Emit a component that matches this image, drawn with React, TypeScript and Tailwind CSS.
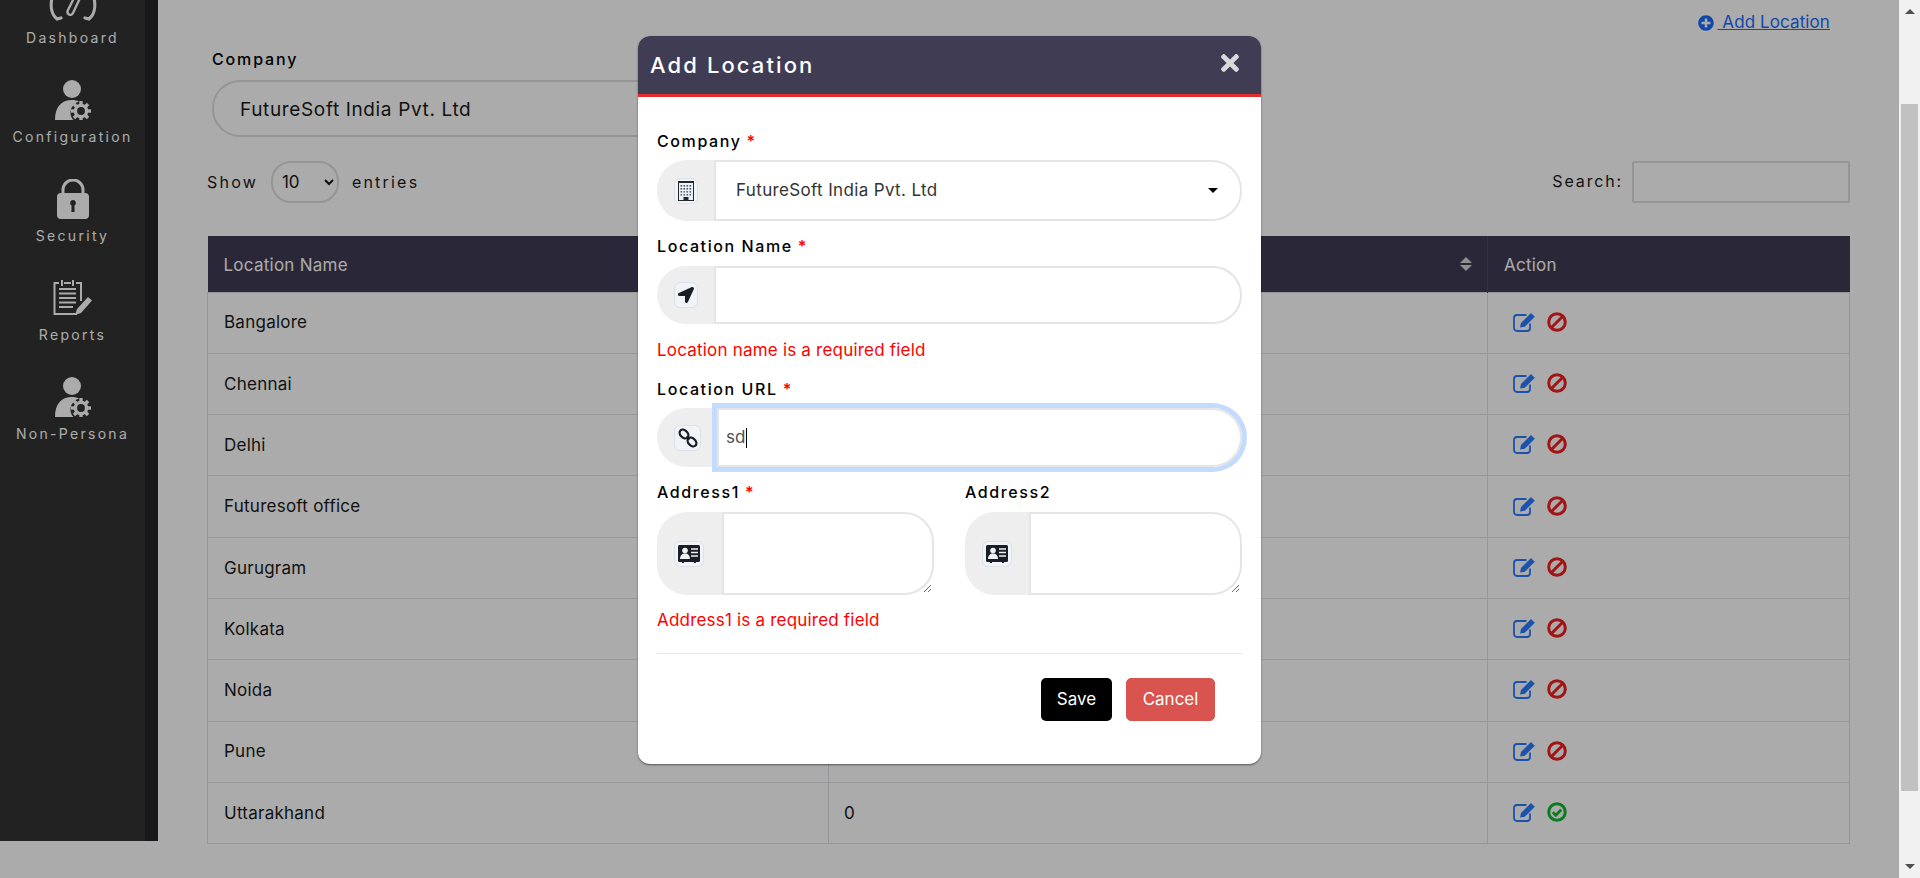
import type { ReactNode } from 'react'
import { FaLocationArrow, FaPlusCircle, FaTimes } from 'react-icons/fa'

const locations = ['Bangalore', 'Chennai', 'Delhi', 'Futuresoft office', 'Gurugram', 'Kolkata', 'Noida', 'Pune', 'Uttarakhand']

function GaugeIcon() {
  return (
    <svg viewBox="0 0 50 40" className="h-[40px] w-[50px]" fill="none" stroke="currentColor" strokeWidth="3.200" strokeLinecap="round">
      <path d="M4 17c-2 9 0 17 5 21l4-1" />
      <path d="M46 17c2 9 0 17-5 21l-4-1" />
      <path d="M20 29c-2 4 3 7 5 3l8-17c1-3-3-5-5-2Z" strokeWidth="2.400" />
    </svg>
  )
}

function UserGearIcon() {
  const teeth = [0, 45, 90, 135, 180, 225, 270, 315]
  return (
    <svg viewBox="0 0 36 40" className="h-[40px] w-[36px]" fill="currentColor">
      <circle cx="17" cy="9" r="9" />
      <path d="M0 40c0-13 6-20 17-20 3 0 5 .5 7 1.500-5 2-8.500 6-8.500 11 0 3 1 5.500 3 7.500Z" />
      <circle cx="26" cy="31" r="5.600" fill="none" stroke="currentColor" strokeWidth="3.400" />
      {teeth.map((deg) => (
        <rect key={deg} x="24.300" y="21" width="3.400" height="4" transform={`rotate(${deg} 26 31)`} />
      ))}
    </svg>
  )
}

function LockIcon() {
  return (
    <svg viewBox="0 0 34 40" className="h-[40px] w-[34px]" fill="currentColor">
      <path d="M7 17v-6a10 10 0 0 1 20 0v6" fill="none" stroke="currentColor" strokeWidth="3" />
      <path fillRule="evenodd" d="M5 14h24a4 4 0 0 1 4 4v18a4 4 0 0 1-4 4H5a4 4 0 0 1-4-4V18a4 4 0 0 1 4-4Zm12 7a3 3 0 0 0-1.400 5.600L15.400 33h3.200l-.2-6.400A3 3 0 0 0 17 21Z" />
    </svg>
  )
}

function ReportIcon() {
  return (
    <svg viewBox="0 0 40 38" className="h-[38px] w-[40px]" fill="none" stroke="currentColor" strokeWidth="2">
      <path d="M6 4H1.500v31H24M28 22V4h-5" />
      <path d="M9 1v6M20 1v6M11 4h7" />
      <path d="M6 10h17M6 14.500h17M6 19h17M6 23.500h17M6 28h14" strokeWidth="2.200" />
      <path d="M22 36l2-6 11-12 4 3.500-11 12.500Z" fill="currentColor" stroke="none" />
    </svg>
  )
}

function BuildingIcon() {
  const windows = [4, 7, 10, 13]
  return (
    <svg viewBox="0 0 16 20" className="h-[20px] w-[16px]">
      <rect x="0.500" y="0.500" width="15" height="19" fill="#eef1f5" stroke="#23262d" />
      <rect x="0" y="0" width="16" height="2" fill="#23262d" />
      {[4, 7, 10, 13].map((y) =>
        windows.map((x) => <rect key={`${x}-${y}`} x={x - 1.500} y={y} width="1.600" height="1.600" fill={y > 7 ? '#5b6b80' : '#44556b'} />),
      )}
      <rect x="5.500" y="16" width="5" height="4" fill="#23262d" />
    </svg>
  )
}

function LinkIcon() {
  return (
    <svg viewBox="0 0 20 20" className="h-[20px] w-[20px]" fill="none" stroke="#1b1d24" strokeWidth="2.300">
      <ellipse cx="6" cy="6" rx="5" ry="3.600" transform="rotate(45 6 6)" />
      <ellipse cx="14" cy="14" rx="5" ry="3.600" transform="rotate(45 14 14)" />
      <path d="M8.500 8.500l3 3" />
    </svg>
  )
}

function IdCardIcon() {
  return (
    <svg viewBox="0 0 22 18" className="h-[18px] w-[22px]">
      <rect x="0" y="0" width="22" height="17" rx="1.500" fill="#1b1d24" />
      <rect x="4" y="16" width="2" height="2" fill="#1b1d24" />
      <rect x="16" y="16" width="2" height="2" fill="#1b1d24" />
      <circle cx="7" cy="5.500" r="2.800" fill="#eef3fa" />
      <path d="M2 14c0-3.500 2-5.500 5-5.500s5 2 5 5.500Z" fill="#eef3fa" />
      <path d="M13 4h7M13 7.500h7M13 11h7" stroke="#eef3fa" strokeWidth="1.600" />
    </svg>
  )
}

function EditIcon() {
  return (
    <svg viewBox="0 0 23 20" className="h-[20px] w-[23px] text-[#2b7bff]" fill="none" stroke="currentColor">
      <path d="M17 11.500V16a3 3 0 0 1-3 3H4a3 3 0 0 1-3-3V6a3 3 0 0 1 3-3h9.500" strokeWidth="1.800" />
      <path d="M7 15.500l1-4.500L18 1l3.800 3.700-10 10Z" fill="currentColor" stroke="none" />
    </svg>
  )
}

function BanIcon() {
  return (
    <svg viewBox="0 0 20 20" className="h-[20px] w-[20px]" fill="none" stroke="#f02020" strokeWidth="3">
      <circle cx="10" cy="10" r="8.300" />
      <path d="M4.500 15.500l11-11" />
    </svg>
  )
}

function CheckCircleIcon() {
  return (
    <svg viewBox="0 0 20 20" className="h-[20px] w-[20px]" fill="none">
      <circle cx="10" cy="10" r="8.300" stroke="#0fb82e" strokeWidth="3" />
      <path d="M5.800 10.200l3 3 5.400-5.400" stroke="#0fb82e" strokeWidth="2.800" />
    </svg>
  )
}

function SideItem({ icon, label }: { icon: ReactNode; label: string }) {
  return (
    <div className="flex h-[99px] flex-col items-center text-white">
      <div className="flex h-[40px] items-center justify-center">{icon}</div>
      <span className="mt-[7px] text-[14px] leading-[20px] tracking-[2.300px]">{label}</span>
    </div>
  )
}

function Sidebar() {
  return (
    <aside className="h-[841px] w-[158px] shrink-0 overflow-hidden border-r-[13px] border-[#242428] bg-[#333333]">
      <div className="-mt-[19px]">
        <SideItem icon={<GaugeIcon />} label="Dashboard" />
        <SideItem icon={<UserGearIcon />} label="Configuration" />
        <SideItem icon={<LockIcon />} label="Security" />
        <SideItem icon={<ReportIcon />} label="Reports" />
        <SideItem icon={<UserGearIcon />} label="Non-Persona" />
      </div>
    </aside>
  )
}

function LocationTable() {
  return (
    <table className="w-[1643px] table-fixed border-collapse text-[17px] tracking-[0.250px] text-[#1a1a1a]">
      <thead>
        <tr className="h-[56px] bg-[#3f3c54] text-white">
          <th className="w-[621px] pl-[16px] pt-[3px] text-left font-normal">Location Name</th>
          <th className="w-[659px] px-[15px] text-right font-normal">
            <span className="float-right flex flex-col gap-[2px] text-white/80">
              <span className="h-0 w-0 border-x-[6px] border-b-[6px] border-x-transparent border-b-current" />
              <span className="h-0 w-0 border-x-[6px] border-t-[6px] border-x-transparent border-t-current" />
            </span>
          </th>
          <th className="border-l border-[#4b4862] pl-[16px] pt-[3px] text-left font-normal">Action</th>
        </tr>
      </thead>
      <tbody>
        {locations.map((name, i) => (
          <tr key={name} className="h-[61.300px]">
            <td className="border border-[#dee2e6] pl-[16px] pt-[1px]">{name}</td>
            <td className="border border-[#dee2e6] px-[15px] pt-[1px]">{i === locations.length - 1 ? '0' : ''}</td>
            <td className="border border-[#dee2e6] pl-[25px]">
              <div className="flex -translate-y-px items-center gap-[11px]">
                <EditIcon />
                {i === locations.length - 1 ? <CheckCircleIcon /> : <BanIcon />}
              </div>
            </td>
          </tr>
        ))}
      </tbody>
    </table>
  )
}

function Page() {
  return (
    <main className="min-w-0 flex-1 pl-[49px] pr-[49px] text-[#1a1a1a]">
      <div className="flex h-[46px] items-center justify-end pr-[20px] text-[17px] tracking-[0.100px] text-[#1a6dff]">
        <FaPlusCircle className="mr-[3px] h-[16px] w-[16px]" />
        <a className="whitespace-pre underline"> Add Location</a>
      </div>
      <div className="pl-[5px] text-[16px] font-medium leading-[27px] tracking-[1.850px] text-black">Company</div>
      <div className="ml-[5px] mt-[7px] flex h-[57px] w-[620px] items-center rounded-[28px] border-2 border-[#dedede] pl-[26px] pt-[3px] text-[19px] tracking-[0.640px]">
        FutureSoft India Pvt. Ltd
      </div>
      <div className="mt-[24px] flex h-[42px] items-center justify-between">
        <div className="flex items-center pb-[1px] text-[16px] tracking-[2.200px]">
          <span>Show</span>
          <select className="ml-[13px] h-[42px] w-[68px] rounded-[20px] border-2 border-[#dedede] pl-[5px] text-[17px] tracking-normal">
            <option>10</option>
          </select>
          <span className="ml-[13px]">entries</span>
        </div>
        <div className="flex items-center text-[16px] tracking-[1.850px]">
          <span className="-translate-y-px">Search:</span>
          <div className="ml-[9px] h-[42px] w-[218px] rounded-[2px] border-2 border-[#dedede]" />
        </div>
      </div>
      <div className="mt-[33px]">
        <LocationTable />
      </div>
    </main>
  )
}

function Label({ text, required }: { text: string; required?: boolean }) {
  return (
    <div className="h-[24px] text-[16px] font-medium leading-[24px] tracking-[1.600px] text-black">
      {text}
      {required && <span className="ml-[5px] font-semibold text-[#ff0000]">*</span>}
    </div>
  )
}

function Addon({ width, badge, icon }: { width: string; badge: string; icon: ReactNode }) {
  return (
    <div className={`flex shrink-0 items-center rounded-l-[30px] bg-[#eeeeee] pl-[17px] ${width}`}>
      <div className={`flex h-[26px] items-center justify-center rounded-[6px] border border-[#dbe1e8] bg-[#f0f3f7] ${badge}`}>{icon}</div>
    </div>
  )
}

function ErrorText({ children }: { children: ReactNode }) {
  return <div className="h-[22px] text-[17px] leading-[22px] tracking-[0.200px] text-[#ff0000]">{children}</div>
}

function AddressField({ label, required, width }: { label: string; required?: boolean; width: string }) {
  return (
    <div>
      <Label text={label} required={required} />
      <div className="mt-[8px] flex h-[83px]">
        <Addon width={width} badge="w-[30px]" icon={<IdCardIcon />} />
        <textarea className="h-[83px] min-w-0 flex-1 rounded-r-[30px] border-2 border-[#e5e5e5]" />
      </div>
    </div>
  )
}

function AddLocationModal() {
  return (
    <div className="absolute left-[638px] top-[36px] w-[623px] overflow-hidden rounded-[12px] bg-white shadow-[0_1px_2px_rgba(0,0,0,0.5)]">
      <div className="flex h-[61px] items-center justify-between border-b-[3px] border-[#e32d2d] bg-[#3f3c54] pl-[12px] pr-[19px] text-white">
        <h5 className="text-[22px] font-medium tracking-[2.100px]">Add Location</h5>
        <FaTimes className="-mt-[5px] h-[26px] w-[24px] text-[#d9d9d9]" />
      </div>
      <div className="px-[19px] pb-[43px] pt-[32px]">
        <Label text="Company" required />
        <div className="mt-[7px] flex h-[61px]">
          <Addon width="w-[57px]" badge="w-[24px]" icon={<BuildingIcon />} />
          <div className="flex min-w-0 flex-1 items-center justify-between rounded-r-[30px] border-2 border-[#e5e5e5] pl-[20px] pr-[22px] text-[17px] tracking-[0.350px] text-[#333]">
            <span>FutureSoft India Pvt. Ltd</span>
            <span className="h-0 w-0 border-x-[5px] border-t-[5px] border-x-transparent border-t-black" />
          </div>
        </div>

        <div className="mt-[13px]">
          <Label text="Location Name" required />
        </div>
        <div className="mt-[8px] flex h-[58px]">
          <Addon width="w-[57px]" badge="w-[24px]" icon={<FaLocationArrow className="h-[16px] w-[16px] text-[#1b1d24]" />} />
          <div className="min-w-0 flex-1 rounded-r-[30px] border-2 border-[#e5e5e5]" />
        </div>
        <div className="mt-[15px]">
          <ErrorText>Location name is a required field</ErrorText>
        </div>

        <div className="mt-[16px]">
          <Label text="Location URL" required />
        </div>
        <div className="mt-[7px] flex h-[59px]">
          <Addon width="w-[60px]" badge="w-[27px]" icon={<LinkIcon />} />
          <div className="flex min-w-0 flex-1 items-center rounded-r-[30px] border-2 border-[#e5e5e5] pl-[7px] pt-[1px] text-[17px] tracking-[0.100px] text-[#495057] shadow-[0_0_0_5px_#c2dbfe]">
            sd
            <span className="h-[20px] w-px bg-black" />
          </div>
        </div>

        <div className="mt-[13px] grid grid-cols-2 gap-[31px]">
          <AddressField label="Address1" required width="w-[65px]" />
          <AddressField label="Address2" width="w-[64px]" />
        </div>
        <div className="mt-[14px]">
          <ErrorText>Address1 is a required field</ErrorText>
        </div>

        <div className="mt-[22px] h-px bg-[#e5e5e5]" />
        <div className="mt-[24px] flex justify-end gap-[14px] pr-[27px]">
          <button className="h-[43px] w-[71px] rounded-[5px] bg-black pt-px text-[17px] font-normal text-white">Save</button>
          <button className="h-[43px] w-[89px] rounded-[5px] border border-[#d9534f] bg-[#d9534f] pt-px text-[17px] font-normal text-white">Cancel</button>
        </div>
      </div>
    </div>
  )
}

function Scrollbar() {
  return (
    <div className="flex w-[21px] shrink-0 flex-col items-center bg-[#f1f1f1]">
      <span className="mt-[9px] h-0 w-0 border-x-[5px] border-b-[5px] border-x-transparent border-b-[#505050]" />
      <div className="mt-[90px] h-[687px] w-[17px] bg-[#c1c1c1]" />
      <span className="mt-[73px] h-0 w-0 border-x-[5px] border-t-[5px] border-x-transparent border-t-[#505050]" />
    </div>
  )
}

export default function App() {
  return (
    <div className="flex h-[878px] w-full overflow-hidden bg-white font-[Inter,sans-serif]">
      <div className="relative flex min-w-0 flex-1">
        <Sidebar />
        <Page />
        <div className="absolute inset-0 bg-black/33" />
        <AddLocationModal />
      </div>
      <Scrollbar />
    </div>
  )
}
